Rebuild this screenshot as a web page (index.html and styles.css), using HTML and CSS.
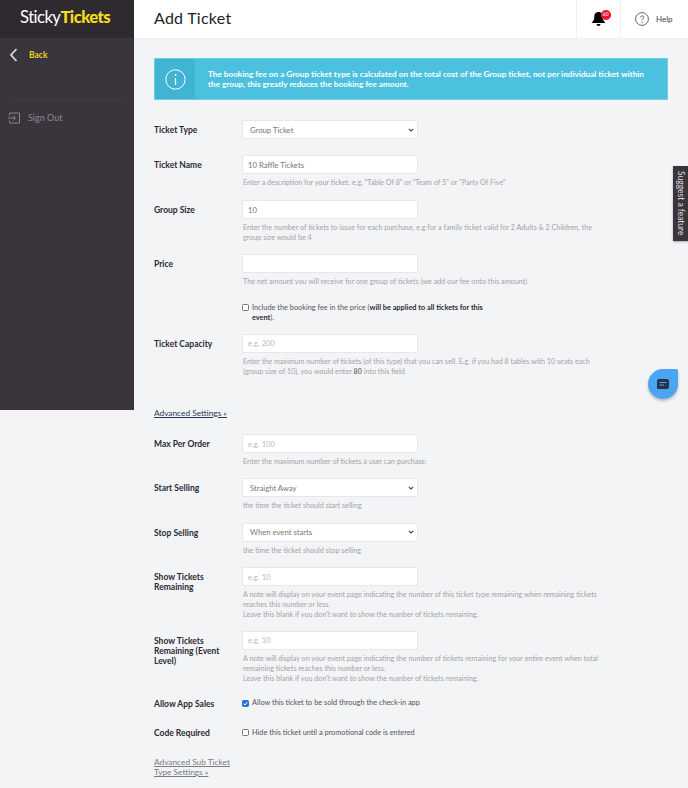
FILE: index.html
```html
<!DOCTYPE html>
<html lang="en">
<head>
<meta charset="utf-8">
<title>Add Ticket</title>
<link rel="stylesheet" href="styles.css">
</head>
<body>
<div class="page">
  <aside class="sidebar">
    <div class="logo"><span class="logo-a">Sticky</span><span class="logo-b">Tickets</span></div>
    <a class="back">
      <svg class="back-icon" width="10" height="14" viewBox="0 0 10 14"><path d="M7.500 1 2 7l5.500 6" fill="none" stroke="#d8d8d8" stroke-width="1.800"/></svg>
      <span>Back</span>
    </a>
    <div class="side-rule"></div>
    <a class="signout">
      <svg width="12" height="12" viewBox="0 0 12 12"><path d="M1.500 3.500V1h10v10h-10V8.500M0 6h7M5 3.500 7.500 6 5 8.500" fill="none" stroke="#8b878d" stroke-width="1"/></svg>
      <span>Sign Out</span>
    </a>
  </aside>
  <div class="main">
    <header class="topbar">
      <h1>Add Ticket</h1>
      <div class="top-cell bell-cell">
        <svg width="15" height="16" viewBox="0 0 15 16"><path d="M7.500 1c3 0 4.200 2.200 4.200 5 0 3 1.300 4.500 2.800 6H.5C2 10.500 3.300 9 3.300 6c0-2.800 1.200-5 4.200-5Zm-2 12h4a2 2 0 0 1-4 0Z" fill="#000"/></svg>
        <span class="badge">60</span>
      </div>
      <div class="top-cell help-cell">
        <svg width="14" height="14" viewBox="0 0 14 14"><circle cx="7" cy="7" r="6.400" fill="none" stroke="#555" stroke-width=".9"/><path d="M5.300 5.300C5.500 3.300 8.800 3.500 8.700 5.400 8.700 6.800 7 6.800 7 8.300" fill="none" stroke="#555" stroke-width=".9"/><circle cx="7" cy="10.200" r=".6" fill="#555"/></svg>
        <span>Help</span>
      </div>
    </header>
    <div class="content">
      <div class="notice">
        <div class="notice-icon">
          <svg width="21" height="21" viewBox="0 0 21 21"><circle cx="10.500" cy="10.500" r="9.700" fill="none" stroke="#fff" stroke-width="1"/><path d="M10.500 9v7" stroke="#fff" stroke-width="1.200"/><circle cx="10.500" cy="6" r=".9" fill="#fff"/></svg>
        </div>
        <p>The booking fee on a Group ticket type is calculated on the total cost of the Group ticket, not per individual ticket within the group, this greatly reduces the booking fee amount.</p>
      </div>

      <div class="row r-type">
        <label>Ticket Type</label>
        <div class="field"><select class="control sel"><option>Group Ticket</option></select></div>
      </div>
      <div class="row r-name">
        <label>Ticket Name</label>
        <div class="field"><input class="control" value="10 Raffle Tickets">
          <p class="help">Enter a description for your ticket. e.g. "Table Of 8" or "Team of 5" or "Party Of Five"</p></div>
      </div>
      <div class="row r-group">
        <label>Group Size</label>
        <div class="field"><input class="control" value="10">
          <p class="help">Enter the number of tickets to issue for each purchase, e.g for a family ticket valid for 2 Adults &amp; 2 Children, the group size would be 4</p></div>
      </div>
      <div class="row r-price">
        <label>Price</label>
        <div class="field"><input class="control">
          <p class="help">The net amount you will receive for one group of tickets (we add our fee onto this amount)</p></div>
      </div>
      <div class="row r-fee">
        <label></label>
        <div class="field check fee"><input type="checkbox"><span>Include the booking fee in the price (<b>will be applied to all tickets for this event</b>).</span></div>
      </div>
      <div class="row r-cap">
        <label>Ticket Capacity</label>
        <div class="field"><input class="control" placeholder="e.g. 200">
          <p class="help">Enter the maximum number of tickets (of this type) that you can sell. E.g. if you had 8 tables with 10 seats each (group size of 10), you would enter <b>80</b> into this field</p></div>
      </div>

      <a class="adv">Advanced Settings «</a>

      <div class="row r-max">
        <label>Max Per Order</label>
        <div class="field"><input class="control" placeholder="e.g. 100">
          <p class="help">Enter the maximum number of tickets a user can purchase.</p></div>
      </div>
      <div class="row r-start">
        <label>Start Selling</label>
        <div class="field"><select class="control sel"><option>Straight Away</option></select>
          <p class="help">the time the ticket should start selling</p></div>
      </div>
      <div class="row r-stop">
        <label>Stop Selling</label>
        <div class="field"><select class="control sel"><option>When event starts</option></select>
          <p class="help">the time the ticket should stop selling</p></div>
      </div>
      <div class="row r-show">
        <label>Show Tickets Remaining</label>
        <div class="field"><input class="control" placeholder="e.g. 10">
          <p class="help">A note will display on your event page indicating the number of this ticket type remaining when remaining tickets reaches this number or less.<br>Leave this blank if you don't want to show the number of tickets remaining.</p></div>
      </div>
      <div class="row r-level">
        <label>Show Tickets Remaining (Event Level)</label>
        <div class="field"><input class="control" placeholder="e.g. 10">
          <p class="help">A note will display on your event page indicating the number of tickets remaining for your entire event when total remaining tickets reaches this number or less.<br>Leave this blank if you don't want to show the number of tickets remaining.</p></div>
      </div>
      <div class="row r-app">
        <label>Allow App Sales</label>
        <div class="field check"><input type="checkbox" checked><span>Allow this ticket to be sold through the check-in app</span></div>
      </div>
      <div class="row r-code">
        <label>Code Required</label>
        <div class="field check"><input type="checkbox"><span>Hide this ticket until a promotional code is entered</span></div>
      </div>
      <a class="adv sub">Advanced Sub Ticket Type Settings »</a>
    </div>
  </div>
  <div class="suggest">Suggest a feature</div>
  <div class="chat">
    <svg width="12" height="10" viewBox="0 0 12 10"><path d="M2 0h8a2 2 0 0 1 2 2v6a2 2 0 0 1-2 2H0V2a2 2 0 0 1 2-2Z" fill="#2b3245"/><path d="M2.500 3.500h7M2.500 6h4.500" stroke="#4aa5f5" stroke-width="1"/></svg>
  </div>
</div>
</body>
</html>
```

FILE: styles.css
```css
* { box-sizing: border-box; }
html, body { margin: 0; padding: 0; }
body {
  font-family: "Lato", "Noto Sans", sans-serif;
  background: #f3f4f6;
  color: #2c2a33;
}
.page {
  position: relative;
  display: flex;
  align-items: flex-start;
  width: 688px;
  height: 788px;
  overflow: hidden;
}
.sidebar {
  flex: 0 0 134px;
  height: 410px;
  background: #3a343d;
}
.logo {
  height: 38px;
  padding-left: 20px;
  background: #2e2a30;
  font-size: 16.700px;
  line-height: 35px;
  letter-spacing: -0.55px;
  white-space: nowrap;
}
.logo-a { color: #fff; font-weight: 400; }
.logo-b { color: #f5dc1d; font-weight: 900; }
.back {
  display: flex;
  align-items: center;
  gap: 10px;
  height: 33px;
  padding-left: 9px;
  color: #e8d52a;
  font-size: 8.500px;
  font-weight: 700;
}
.side-rule {
  height: 1px;
  margin: 29px 11px 0 11px;
  background: #423c45;
}
.signout {
  display: flex;
  align-items: center;
  gap: 8px;
  margin-top: 10px;
  height: 13px;
  padding-left: 8px;
  color: #8b878d;
  font-size: 9px;
}
.main { flex: 1; min-width: 0; }
.topbar {
  display: flex;
  align-items: center;
  height: 38.500px;
  background: #fff;
  border-bottom: 1px solid #eeeff1;
}
.topbar h1 {
  flex: 1;
  margin: 0 0 2px;
  padding-left: 20px;
  font-size: 16px;
  font-weight: 400;
  letter-spacing: 0.25px;
  color: #222;
}
.top-cell {
  position: relative;
  display: flex;
  align-items: center;
  height: 37.500px;
  border-left: 1px solid #f1f1f2;
}
.bell-cell { width: 44px; padding-left: 14px; }
.help-cell { width: 68px; padding-left: 14px; gap: 7px; font-size: 8px; color: #444; }
.badge {
  position: absolute;
  top: 10px;
  left: 24px;
  width: 9.500px;
  height: 9.500px;
  border-radius: 50%;
  background: #f0162a;
  color: #fff;
  font-size: 5px;
  line-height: 9.500px;
  text-align: center;
}
.content { padding: 19.500px 20px 0 20px; }
.notice {
  display: flex;
  align-items: center;
  width: 514px;
  height: 42px;
  background: #4bc0df;
  border: 1px solid #70cde6;
  color: #fff;
}
.notice-icon {
  display: flex;
  align-items: center;
  justify-content: center;
  flex: 0 0 40px;
  height: 100%;
  background: #41b4d3;
}
.notice p {
  width: 440px;
  margin: 0 0 0 13px;
  font-size: 8.200px;
  font-weight: 700;
  line-height: 10px;
}
.row {
  display: grid;
  grid-template-columns: 88px 1fr;
}
.row label {
  font-size: 8.500px;
  font-weight: 700;
  line-height: 10px;
  padding-top: 5px;
  padding-right: 8px;
  color: #2c2a33;
}
.field { width: 364px; }
.control {
  display: block;
  width: 176px;
  height: 19px;
  padding: 0 5px;
  border: 1px solid #e6e7ea;
  border-radius: 2px;
  background: #fff;
  font: 7.700px "Lato", sans-serif;
  color: #777;
}
.sel {
  padding: 0 7px;
  appearance: none;
  background: #fff url("data:image/svg+xml,%3Csvg xmlns='http://www.w3.org/2000/svg' width='6' height='4'%3E%3Cpath d='M.8.8 3 3l2.200-2.200' fill='none' stroke='%23444' stroke-width='1.100'/%3E%3C/svg%3E") no-repeat right 3px center;
}
.control::placeholder { color: #bbb; }
.help {
  margin: 4px 0 0 1px;
  font-size: 7.200px;
  line-height: 10px;
  color: #a3a3a7;
}
.help b { color: #777; }
.check {
  display: flex;
  align-items: flex-start;
  font-size: 7.350px;
  line-height: 10px;
  color: #55535a;
}
.check input {
  flex: 0 0 7px;
  width: 7px;
  height: 7px;
  margin: 1.500px 3px 0 0;
  appearance: none;
  background: #fff;
  border: 1px solid #77767a;
  border-radius: 1.500px;
}
.check input:checked {
  border-color: #1f6fdc;
  background: #1f6fdc url("data:image/svg+xml,%3Csvg xmlns='http://www.w3.org/2000/svg' width='5' height='5'%3E%3Cpath d='M.6 2.600 2 4l2.400-3' fill='none' stroke='%23fff' stroke-width='1'/%3E%3C/svg%3E") no-repeat center;
}
.check b { color: #2c2a33; }
.fee span { width: 235px; }
.r-type { margin-top: 20px; }
.r-name { margin-top: 16px; }
.r-group { margin-top: 12px; }
.r-price { margin-top: 11px; }
.r-fee { margin-top: 15.500px; }
.r-cap { margin-top: 11px; }
.adv {
  display: block;
  margin-top: 31px;
  font-size: 8.300px;
  line-height: 10px;
  color: #2c3457;
  text-decoration: underline;
}
.r-max { margin-top: 16.500px; }
.r-start { margin-top: 11px; }
.r-stop { margin-top: 11.500px; }
.r-show { margin-top: 11.500px; }
.r-level { margin-top: 10.500px; }
.r-app { margin-top: 14.500px; }
.r-app label, .r-code label { padding-top: 0.500px; }
.r-code { margin-top: 19px; }
.adv.sub {
  width: 86px;
  margin-top: 19px;
  color: #7a7a80;
}
.suggest {
  position: absolute;
  top: 166px;
  right: 0;
  width: 15px;
  height: 75px;
  background: #3a343d;
  color: #ddd;
  font-size: 8.500px;
  line-height: 15px;
  text-align: center;
  writing-mode: vertical-rl;
  box-shadow: 0 1px 2px rgba(0,0,0,.3);
}
.chat {
  position: absolute;
  top: 369px;
  left: 648px;
  display: flex;
  align-items: center;
  justify-content: center;
  width: 30px;
  height: 30px;
  border-radius: 50% 2px 50% 50%;
  background: #4aa5f5;
  box-shadow: 0 2px 3px rgba(0,0,0,.25);
}
```
